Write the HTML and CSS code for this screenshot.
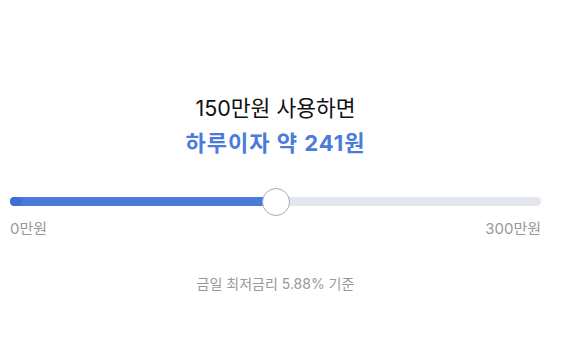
FILE: index.html
```html
<!DOCTYPE html>
<html lang="ko">
<head>
    <meta charset="UTF-8">
    <title>하루이자 계산</title>
    <link rel="stylesheet" href="styles.css">
</head>
<body>
    <main class="calc">
        <div class="summary">
            <p class="summary-amount">150만원 사용하면</p>
            <p class="summary-interest">하루이자 약 241원</p>
        </div>

        <div class="slider">
            <div class="slider-track">
                <div class="slider-fill" style="width: 50%"></div>
                <div class="slider-start"></div>
                <div class="slider-thumb" style="left: 50%"></div>
            </div>
            <div class="slider-labels">
                <span>0만원</span>
                <span>300만원</span>
            </div>
        </div>

        <p class="rate-note">금일 최저금리 5.88% 기준</p>
    </main>
</body>
</html>
```

FILE: styles.css
```css
:root {
    --blue: #4a7bdc;
    --track: #e3e6ec;
    --text-primary: #111111;
    --text-secondary: #999999;
}

* {
    margin: 0;
    padding: 0;
    box-sizing: border-box;
}

body {
    font-family: Inter, "Noto Sans CJK KR", sans-serif;
    background: #ffffff;
    color: var(--text-primary);
}

.calc {
    padding: 92px 20px 0 10px;
    display: flex;
    flex-direction: column;
}

/* Summary */
.summary {
    text-align: center;
}

.summary-amount {
    font-size: 21.5px;
    line-height: 32px;
}

.summary-interest {
    margin-top: 3px;
    font-size: 22px;
    line-height: 32px;
    font-weight: 700;
    letter-spacing: 1px;
    color: var(--blue);
}

/* Slider */
.slider {
    margin-top: 38px;
}

.slider-track {
    position: relative;
    height: 9px;
    border-radius: 5px;
    background: var(--track);
}

.slider-fill {
    height: 100%;
    border-radius: 5px 0 0 5px;
    background: var(--blue);
}

.slider-start {
    position: absolute;
    left: 0;
    top: 0;
    width: 12px;
    height: 9px;
    border-radius: 5px;
    background: #3f6fd4;
}

.slider-thumb {
    position: absolute;
    top: 50%;
    width: 28px;
    height: 28px;
    border-radius: 50%;
    background: #ffffff;
    border: 1px solid #a6acbd;
    transform: translate(-50%, -50%);
}

.slider-labels {
    display: flex;
    justify-content: space-between;
    margin-top: 13px;
    font-size: 15px;
    line-height: 20px;
    color: var(--text-secondary);
}

.rate-note {
    margin-top: 35px;
    text-align: center;
    font-size: 14px;
    line-height: 20px;
    color: var(--text-secondary);
}
```
